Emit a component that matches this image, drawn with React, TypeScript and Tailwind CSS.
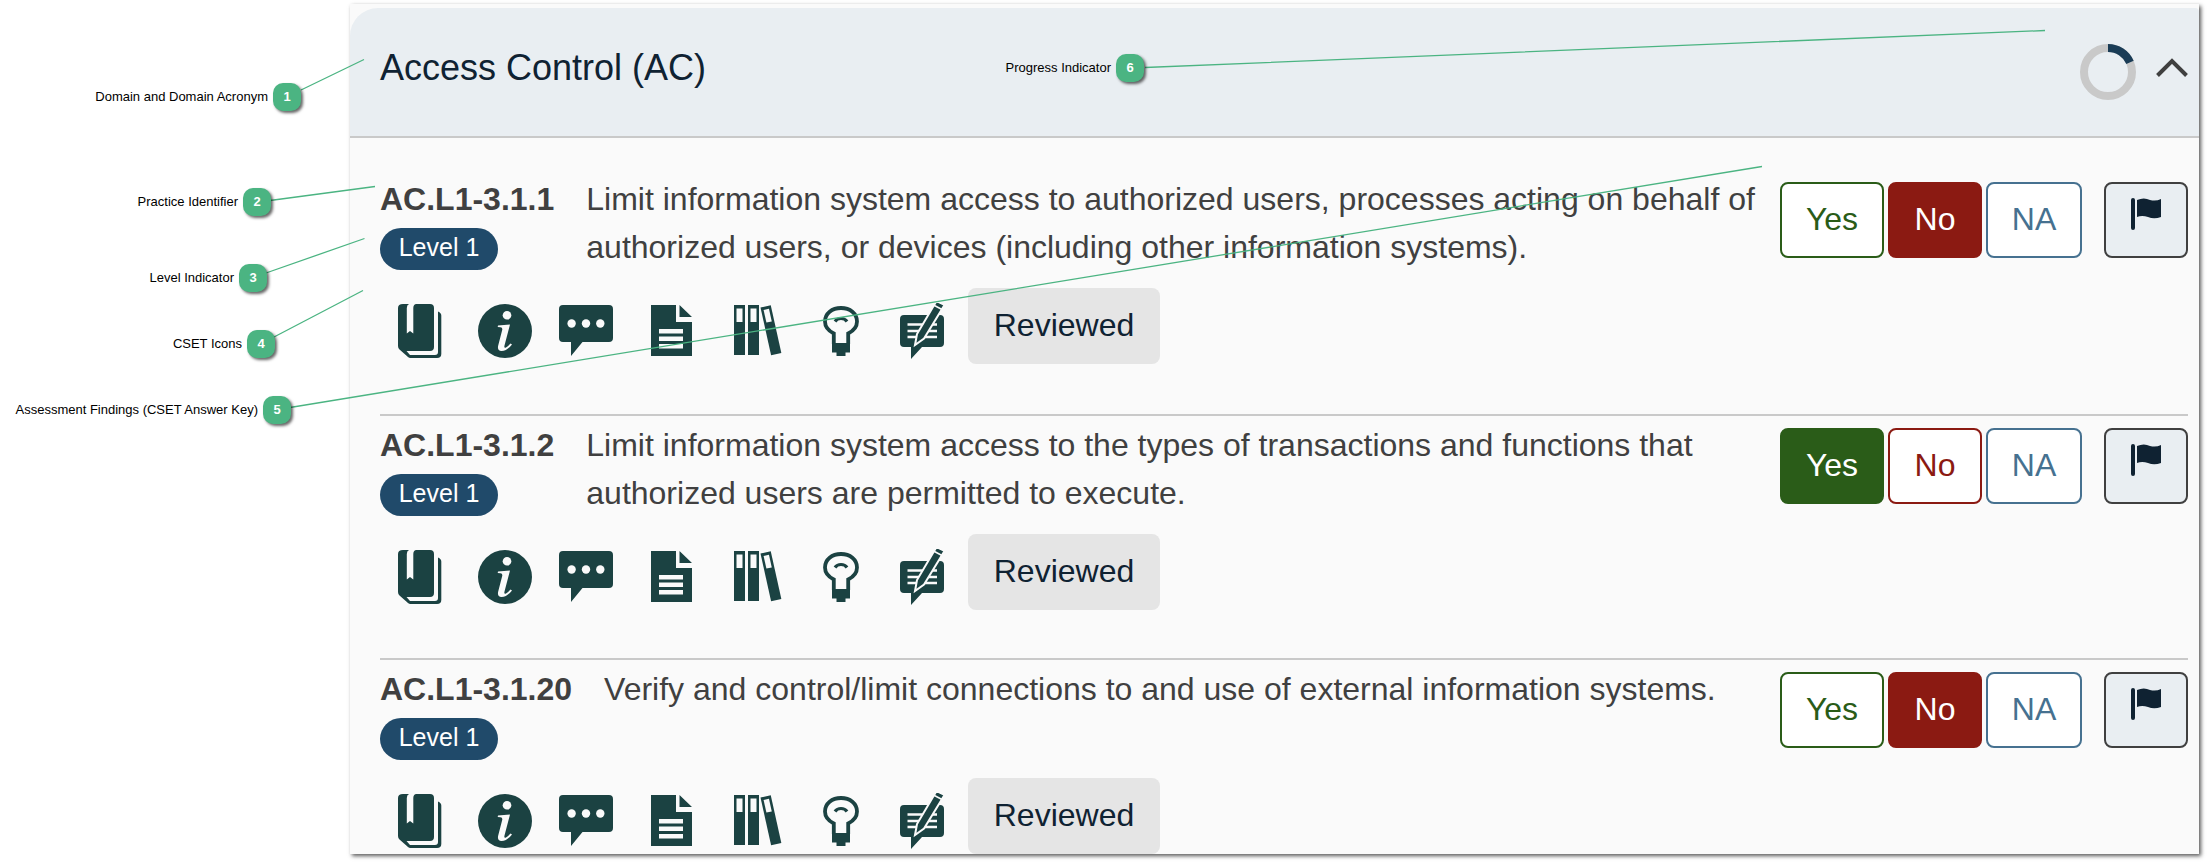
const INK = "#1b4242";

function BookIcon() {
  return (
    <svg width="44" height="54" viewBox="0 0 44 54" aria-hidden="true">
      <path fill={INK} d="M5 0H11Q8.800 1 8.800 4V29.500L12 27L15.300 29.500V4C15.300 2 16.200 0 18.500 0H32Q36 0 36 4V43Q36 47 32 47H8.500L12 51H37Q40 51 40 48V7.500Q43.300 9 43.300 11.500V50Q43.300 54 39 54H12.500Q11 54 10 53L1.500 45.500Q0 44 0 42V4Q0 0 5 0Z" />
    </svg>
  );
}

function InfoIcon() {
  return (
    <svg width="54" height="54" viewBox="0 0 54 54" aria-hidden="true">
      <circle cx="27" cy="27" r="27" fill={INK} />
      <circle cx="29" cy="11.300" r="4.300" fill="#fafafa" />
      <path fill="#fafafa" d="M20 21.500L32 20.500L26.500 41.500Q25.800 44.500 28 43.500Q30.500 42 32.500 39.500L34 40.500Q29 47 23.500 47Q19 47 20.200 41.500L24.200 26Q24.800 23.500 22.500 23.300L19.700 23Z" />
    </svg>
  );
}

function CommentIcon() {
  return (
    <svg width="54" height="52" viewBox="0 0 54 52" aria-hidden="true">
      <path fill={INK} d="M4 0H50Q54 0 54 4V33Q54 37 50 37H23.500L12 51V37H4Q0 37 0 33V4Q0 0 4 0Z" />
      <g fill="#fafafa">
        <circle cx="12.600" cy="18.500" r="4.200" />
        <circle cx="27" cy="18.500" r="4.200" />
        <circle cx="41.300" cy="18.500" r="4.200" />
      </g>
    </svg>
  );
}

function DocumentIcon() {
  return (
    <svg width="42" height="52" viewBox="0 0 42 52" aria-hidden="true">
      <path fill={INK} d="M0 0H25V17H41V51H0ZM28.500 0L41 12H28.500Z" />
      <path fill="#fafafa" d="M8 24H32V28.500H8ZM8 31.500H32V36H8ZM8 39H32V43.500H8Z" />
    </svg>
  );
}

function BindersIcon() {
  return (
    <svg width="49" height="52" viewBox="0 0 49 52" aria-hidden="true">
      <path fill={INK} d="M0 0H11V50H0ZM14 0H25V50H14Z" />
      <path fill="#fafafa" d="M2.500 3.500H8.500V17H2.500ZM16.500 3.500H22.500V17H16.500Z" />
      <g transform="translate(26.500 2.500) rotate(-12.500)">
        <path fill={INK} d="M0 0H10.500V49H0Z" />
        <path fill="#fafafa" d="M2.500 3H8V16H2.500Z" />
      </g>
    </svg>
  );
}

function BulbIcon() {
  return (
    <svg width="36" height="51" viewBox="0 0 36 51" aria-hidden="true">
      <path fill="none" stroke={INK} strokeWidth="3.800" d="M10.800 38V27.500Q2 23 2 15.500C2 7.500 9 2 18 2S34 7.500 34 15.500Q34 23 25.200 27.500V38" />
      <path fill={INK} d="M9 37H27V46.500H22.500V50H13.500V46.500H9Z" />
      <path fill="none" stroke={INK} strokeWidth="3.200" d="M12 15.500Q14 12.500 18 12.500T24 15.500" />
    </svg>
  );
}

function NoteIcon() {
  return (
    <svg width="44" height="58" viewBox="0 0 44 58" aria-hidden="true">
      <path fill={INK} d="M4 13H40Q44 13 44 17V41Q44 45 40 45H22L11 57V45H4Q0 45 0 41V17Q0 13 4 13Z" />
      <path stroke="#fafafa" strokeWidth="2.400" d="M7.500 22.500H37M7.500 29H37M7.500 35H37" />
      <path fill={INK} stroke="#fafafa" strokeWidth="2" d="M36.500 -1L44.500 3L24 36.500L15 43L17 32Z" />
      <path stroke="#fafafa" strokeWidth="1.500" d="M33.500 3L42 7.500" />
    </svg>
  );
}

const tools = [
  { name: "Reference", icon: BookIcon, cell: "w-[80px]" },
  { name: "Information", icon: InfoIcon, cell: "w-[81px]" },
  { name: "Comments", icon: CommentIcon, cell: "w-[92px]" },
  { name: "Documents", icon: DocumentIcon, cell: "w-[83px]" },
  { name: "Library", icon: BindersIcon, cell: "w-[89px]" },
  { name: "Discovery", icon: BulbIcon, cell: "w-[77px]" },
  { name: "Notes", icon: NoteIcon, cell: "w-[68px]" },
];

type Answer = "Yes" | "No" | "NA";

const answers: { value: Answer; width: string; on: string; off: string }[] = [
  { value: "Yes", width: "w-[104px]", on: "border-[#2a5c18] bg-[#2a5c18] text-white", off: "border-[#2a5c18] bg-white text-[#2a5c18]" },
  { value: "No", width: "w-[94px]", on: "border-[#8b1a12] bg-[#8b1a12] text-white", off: "border-[#8b1a12] bg-white text-[#8b1a12]" },
  { value: "NA", width: "w-[96px]", on: "border-[#467190] bg-[#467190] text-white", off: "border-[#467190] bg-white text-[#467190]" },
];

const practices: { id: string; text: string; answer: Answer }[] = [
  {
    id: "AC.L1-3.1.1",
    text: "Limit information system access to authorized users, processes acting on behalf of authorized users, or devices (including other information systems).",
    answer: "No",
  },
  {
    id: "AC.L1-3.1.2",
    text: "Limit information system access to the types of transactions and functions that authorized users are permitted to execute.",
    answer: "Yes",
  },
  {
    id: "AC.L1-3.1.20",
    text: "Verify and control/limit connections to and use of external information systems.",
    answer: "No",
  },
];

function Practice({ id, text, answer }: { id: string; text: string; answer: Answer }) {
  return (
    <li className="border-b-2 border-[#c9c9c9] pt-[5px] pb-12 first:pb-[50px] last:border-b-0 last:pb-0">
      <div className="flex items-start">
        <div className="min-h-[113px] shrink-0 pt-[5px] pr-8">
          <h2 className="text-[32px] leading-[38px] font-bold">{id}</h2>
          <span className="mt-[10px] flex h-[42px] w-[118px] items-center justify-center rounded-full bg-[#204a6a] pb-[2px] text-[25px] text-white">
            Level 1
          </span>
        </div>
        <p className="min-w-0 flex-1 pr-5 text-[32px] leading-[48px]">{text}</p>
        <div className="flex shrink-0 gap-1 pt-[7px]">
          {answers.map((a) => (
            <button
              key={a.value}
              aria-pressed={a.value === answer}
              className={`${a.width} ${a.value === answer ? a.on : a.off} h-[76px] rounded-lg border-2 pb-[2px] text-[32px]`}
            >
              {a.value}
            </button>
          ))}
          <button aria-label="Flag for review" className="ml-[18px] flex h-[76px] w-[84px] justify-center rounded-lg border-2 border-[#404040] bg-[#e9eef2] pt-[14px]">
            <svg width="32" height="32" viewBox="0 0 32 32" aria-hidden="true">
              <path fill="#0f2232" d="M1 2Q1 0 3 0T5 2V30Q5 32 3 32T1 30ZM7 2Q14 -1 20 2Q26 3.500 31 1V19Q24 21.500 18 19Q12 17 7 19Z" />
            </svg>
          </button>
        </div>
      </div>
      <div className="flex items-start">
        <div className="flex items-center pt-[13px] pl-[18px]">
          {tools.map(({ name, icon: Icon, cell }) => (
            <button key={name} aria-label={name} className={`${cell} flex h-[60px] items-center`}>
              <Icon />
            </button>
          ))}
        </div>
        <button className="h-[76px] w-48 rounded-lg bg-[#e5e5e5] pb-[2px] text-[32px] text-[#0f2232]">Reviewed</button>
      </div>
    </li>
  );
}

const callouts = [
  { n: 1, text: "Domain and Domain Acronym", place: "w-[301px] top-[83px]" },
  { n: 2, text: "Practice Identifier", place: "w-[271px] top-[188px]" },
  { n: 3, text: "Level Indicator", place: "w-[267px] top-[264px]" },
  { n: 4, text: "CSET Icons", place: "w-[275px] top-[330px]" },
  { n: 5, text: "Assessment Findings (CSET Answer Key)", place: "w-[291px] top-[396px]" },
  { n: 6, text: "Progress Indicator", place: "w-[1144px] top-[54px]" },
];

export default function App() {
  return (
    <div className="relative overflow-hidden bg-white pt-1 pr-[9px] pb-2 pl-[350px] font-['Liberation_Sans',Arial,sans-serif] text-[#404040]">
      <main className="bg-[#fafafa] pt-1 shadow-[2px_2px_4px_0_rgba(0,0,0,0.65)]">
        <header className="flex h-[130px] items-center justify-between rounded-tl-[28px] rounded-tr-sm border-b-2 border-[#c9c9c9] bg-[#e9eef2] pr-[11px] pl-[30px]">
          <h1 className="pb-2 text-[36px] text-[#0f2232]">Access Control (AC)</h1>
          <div className="flex items-center gap-5">
            <svg width="56" height="56" viewBox="0 0 56 56" role="img" aria-label="Progress">
              <circle cx="28" cy="28" r="24" fill="none" stroke="#c9c9c9" strokeWidth="8" />
              <path d="M28 4A24 24 0 0 1 50 18.400" fill="none" stroke="#1a3c56" strokeWidth="8" />
            </svg>
            <button aria-label="Collapse" className="pb-2">
              <svg width="32" height="20" viewBox="0 0 32 20" aria-hidden="true">
                <path d="M1.500 17.500L16 3L30.500 17.500" fill="none" stroke="#404040" strokeWidth="4" />
              </svg>
            </button>
          </div>
        </header>
        <ul className="pt-8 pr-[11px] pl-[30px]">
          {practices.map((p) => (
            <Practice key={p.id} {...p} />
          ))}
        </ul>
      </main>
      <svg className="pointer-events-none absolute top-0 left-0" width="2208" height="862" viewBox="0 0 2208 862" aria-hidden="true">
        <path fill="none" stroke="#4bb482" strokeWidth="1.300" d="M301 90L364 59.500M270 200.500L375 186.500M266 273L364.500 238.500M274 337L363 290.500M290 407.500L1762 166.500M1145 67.500L2045 30.500" />
      </svg>
      {callouts.map((c) => (
        <div key={c.n} className={`pointer-events-none absolute left-0 ${c.place} flex h-7 items-center justify-end gap-[5px] text-[13px] whitespace-nowrap text-black`}>
          {c.text}
          <span className="flex size-7 items-center justify-center rounded-[10px] bg-[#4bb482] font-bold text-white shadow-[2px_2px_3px_rgba(0,0,0,0.6)]">
            {c.n}
          </span>
        </div>
      ))}
    </div>
  );
}
